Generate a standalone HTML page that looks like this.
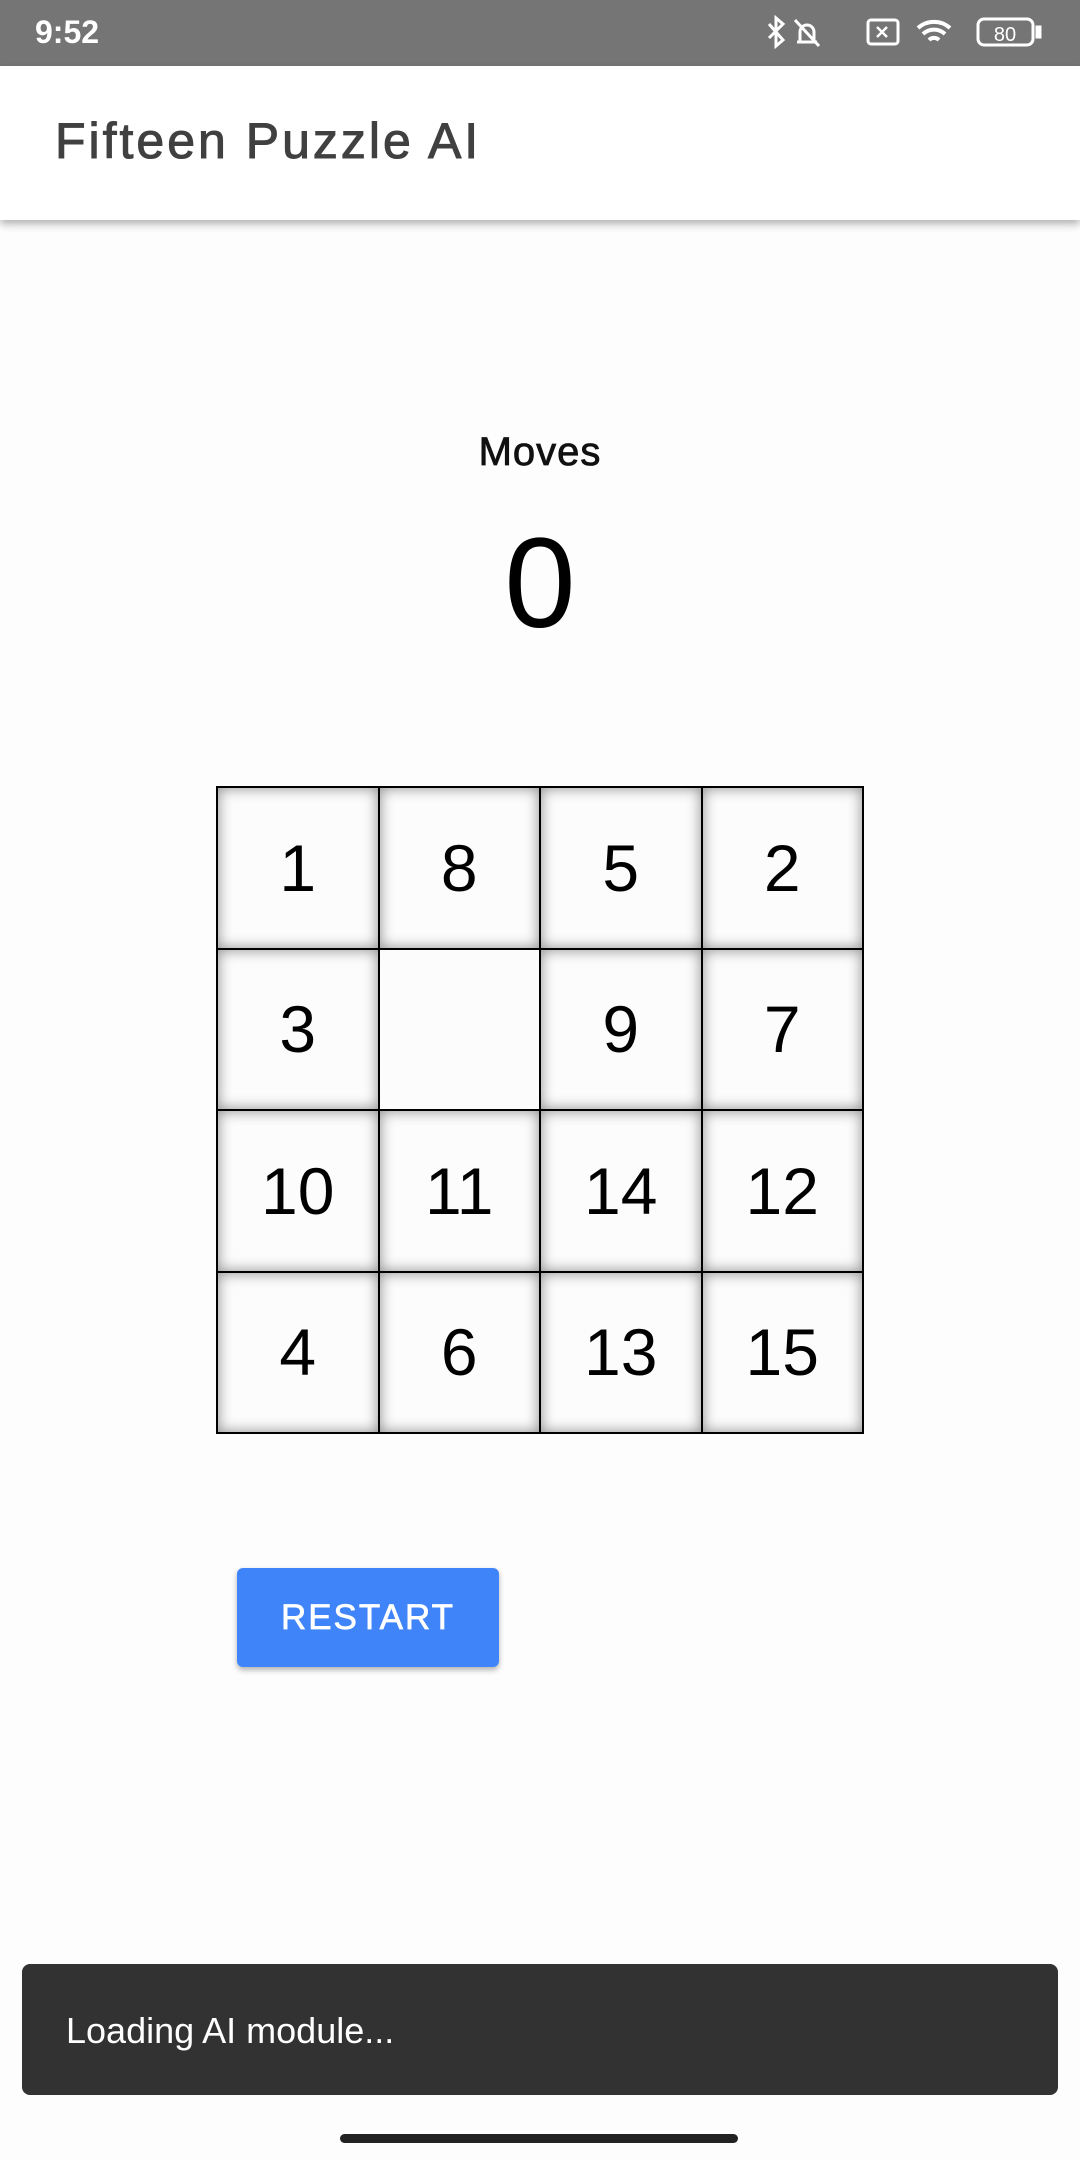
<!DOCTYPE html>
<html><head><meta charset="utf-8"><style>
*{margin:0;padding:0;box-sizing:border-box}
body{width:1080px;height:2160px;background:#fdfdfd;font-family:"Liberation Sans",sans-serif;position:relative;overflow:hidden}
.sb{position:absolute;top:0;left:0;width:1080px;height:66px;background:#757575;color:#fff}
.sb .t{position:absolute;left:35px;top:14px;font-size:32px;font-weight:bold}
.ab{position:absolute;top:66px;left:0;width:1080px;height:154px;background:#fff;box-shadow:0 4px 8px rgba(0,0,0,.3)}
.ab span{position:absolute;left:55px;top:46px;font-size:50px;color:#404040;letter-spacing:3px;-webkit-text-stroke:1px #404040}
.ml{position:absolute;top:430px;width:1080px;text-align:center;font-size:40px;color:#111;letter-spacing:1px;-webkit-text-stroke:0.8px #111}
.mv{position:absolute;top:510px;width:1080px;text-align:center;font-size:128px;color:#000}
.g{position:absolute;left:216px;top:786px;width:648px;height:648px;border:2px solid #000;display:grid;grid-template-columns:repeat(4,1fr);grid-template-rows:repeat(4,1fr);background:#000;gap:2px}
.g div{background:#fcfcfc;box-shadow:inset 0 0 14px rgba(0,0,0,.45);display:flex;align-items:center;justify-content:center;font-size:66px;color:#000}
.g div.e{box-shadow:none}
.btn{position:absolute;left:237px;top:1568px;width:262px;height:99px;background:#3f84f8;border-radius:6px;box-shadow:0 3px 6px rgba(0,0,0,.3);color:#fff;font-size:35px;letter-spacing:2px;-webkit-text-stroke:0.7px #fff;display:flex;align-items:center;justify-content:center}
.snk{position:absolute;left:22px;top:1964px;width:1036px;height:131px;background:#323232;border-radius:8px;color:#fff;font-size:36px;padding:46px 0 0 44px}
.nav{position:absolute;left:340px;top:2134px;width:398px;height:9px;background:#222;border-radius:5px}
</style></head><body>
<div class="sb"><span class="t">9:52</span>
<svg style="position:absolute;left:765px;top:14px" width="290" height="38" viewBox="0 0 290 38" fill="none" stroke="#fff" stroke-width="3">
<path d="M4 10l14 16-7 6V4l7 6L4 24"/>
<path d="M32 28h20M35 27v-9a7 7 0 0 1 14 0v9M30 6l24 26"/>
<rect x="103" y="6" width="30" height="24" rx="3"/><path d="M112 13l10 10M122 13l-10 10" stroke-width="2.5"/>
<path d="M153 14a24 24 0 0 1 32 0M158 20a16 16 0 0 1 22 0M164 26a7 7 0 0 1 10 0" stroke-width="4"/>
<rect x="213" y="5" width="55" height="26" rx="6"/><rect x="272" y="13" width="3" height="10" fill="#fff"/>
<text x="240" y="27" fill="#fff" stroke="none" font-size="20" text-anchor="middle" font-family="Liberation Sans">80</text>
</svg></div>
<div class="ab"><span>Fifteen Puzzle AI</span></div>
<div class="ml">Moves</div>
<div class="mv">0</div>
<div class="g">
<div>1</div><div>8</div><div>5</div><div>2</div>
<div>3</div><div class="e"></div><div>9</div><div>7</div>
<div>10</div><div>11</div><div>14</div><div>12</div>
<div>4</div><div>6</div><div>13</div><div>15</div>
</div>
<div class="btn">RESTART</div>
<div class="snk">Loading AI module...</div>
<div class="nav"></div>
</body></html>
